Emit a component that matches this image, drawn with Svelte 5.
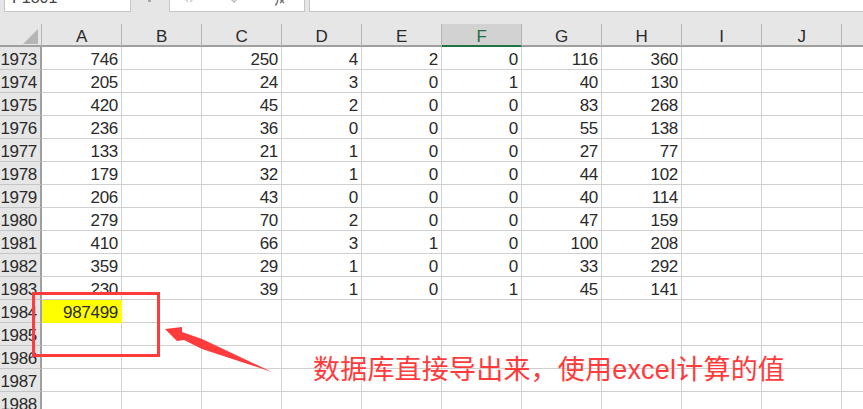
<script>
  const columns = ['A', 'B', 'C', 'D', 'E', 'F', 'G', 'H', 'I', 'J', ''];
  const rows = [
    [1973, 746, '', 250, 4, 2, 0, 116, 360],
    [1974, 205, '', 24, 3, 0, 1, 40, 130],
    [1975, 420, '', 45, 2, 0, 0, 83, 268],
    [1976, 236, '', 36, 0, 0, 0, 55, 138],
    [1977, 133, '', 21, 1, 0, 0, 27, 77],
    [1978, 179, '', 32, 1, 0, 0, 44, 102],
    [1979, 206, '', 43, 0, 0, 0, 40, 114],
    [1980, 279, '', 70, 2, 0, 0, 47, 159],
    [1981, 410, '', 66, 3, 1, 0, 100, 208],
    [1982, 359, '', 29, 1, 0, 0, 33, 292],
    [1983, 230, '', 39, 1, 0, 1, 45, 141],
    [1984, 987499],
    [1985],
    [1986],
    [1987],
    [1988]
  ];
</script>

<div class="sheet">
  <div class="toolbar">
    <div class="namebox"><span>F1801</span></div>
    <div class="grip"></div>
    <div class="fxbox">
      <svg width="135" height="11" viewBox="0 0 135 11">
        <path d="M13 -3l5 5M25 -3l-5 5" stroke="#d0d0d0" stroke-width="1.6" fill="none" />
        <path d="M60 -2l4 4 5-5" stroke="#c8c8c8" stroke-width="1.8" fill="none" />
        <path d="M105 5c2 0 2-2 3-6M110 -1l4 4M114 -1l-4 4" stroke="#777" stroke-width="1.4" fill="none" />
      </svg>
    </div>
    <div class="formula"></div>
  </div>

  <div class="grid">
    <div class="corner"><i></i></div>
    {#each columns as col}
      <div class="colhead" class:active={col === 'F'}>{col}</div>
    {/each}

    {#each rows as row}
      <div class="rowhead">{row[0]}</div>
      {#each columns as _, i}
        <div class="cell" class:yellow={row[0] === 1984 && i === 0}>{row[i + 1] ?? ''}</div>
      {/each}
    {/each}
  </div>

  <div class="redbox"></div>
  <svg class="arrow" width="120" height="60" viewBox="0 0 120 60">
    <path d="M1 2L18 0L18 5L38 12L108 45L38 22L20 13L13 14Z" fill="#ff3b3b" />
  </svg>
  <div class="note">数据库直接导出来，使用excel计算的值</div>
</div>

<style>
  :global(body) {
    margin: 0;
    background: #fff;
  }
  .sheet {
    position: relative;
    width: 863px;
    height: 409px;
    overflow: hidden;
    background: #e6e6e6;
    font-family: "Liberation Sans", "Noto Sans CJK SC", sans-serif;
    color: #2a2a2a;
  }
  .toolbar {
    display: flex;
    height: 24px;
    padding-left: 4px;
    box-sizing: border-box;
  }
  .namebox, .fxbox, .formula {
    height: 12px;
    box-sizing: border-box;
    background: #fff;
    border: 1px solid #c6c6c6;
    border-top: 0;
    overflow: hidden;
  }
  .namebox {
    width: 127px;
    font-size: 16px;
    line-height: 16px;
    padding-left: 7px;
    color: #444;
  }
  .namebox span {
    display: block;
    margin-top: -10px;
  }
  .grip {
    width: 38px;
    position: relative;
  }
  .grip::after {
    content: "";
    position: absolute;
    left: 17px;
    top: 0;
    width: 3px;
    height: 2px;
    background: #a8a8a8;
  }
  .fxbox {
    width: 136px;
    margin-right: 4px;
  }
  .fxbox svg {
    display: block;
  }
  .formula {
    flex: 1;
    border-right: 0;
  }
  .grid {
    display: grid;
    grid-template-columns: 42px repeat(11, 80px);
    grid-auto-rows: 23px;
    background: #fff;
    font-size: 17px;
    letter-spacing: -0.3px;
  }
  .corner, .colhead, .rowhead {
    background: #e6e6e6;
    box-sizing: border-box;
  }
  .corner {
    position: relative;
    border-right: 1px solid #b4b4b4;
    border-bottom: 2px solid #9f9f9f;
  }
  .corner i {
    position: absolute;
    right: 3px;
    bottom: 1px;
    border-style: solid;
    border-width: 0 0 15px 15px;
    border-color: transparent transparent #b5b5b5 transparent;
  }
  .colhead {
    height: 23px;
    line-height: 26px;
    text-align: center;
    border-right: 1px solid #b4b4b4;
    border-bottom: 2px solid #9f9f9f;
  }
  .colhead.active {
    background: #d2d2d2;
    color: #1f6e43;
    border-bottom-color: #217346;
  }
  .rowhead {
    line-height: 26px;
    text-align: right;
    padding-right: 3px;
    border-right: 2px solid #a0a0a0;
    border-bottom: 1px solid #c6c6c6;
  }
  .cell {
    box-sizing: border-box;
    line-height: 26px;
    padding-right: 3px;
    text-align: right;
    border-right: 1px solid #d0d0d0;
    border-bottom: 1px solid #d0d0d0;
  }
  .cell.yellow {
    background: #ffff00;
    border-color: #ffff00;
  }
  .redbox {
    position: absolute;
    left: 32px;
    top: 292px;
    width: 128px;
    height: 65px;
    box-sizing: border-box;
    border: 3px solid #ff3b3b;
  }
  .arrow {
    position: absolute;
    left: 164px;
    top: 327px;
  }
  .note {
    position: absolute;
    left: 313px;
    top: 352px;
    font-size: 27px;
    letter-spacing: 0.2px;
    line-height: 36px;
    color: #ff3b3b;
    white-space: nowrap;
  }
</style>
